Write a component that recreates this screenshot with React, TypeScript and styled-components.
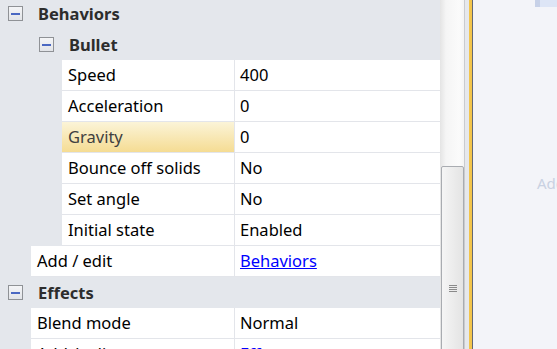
import React from "react";
import styled, { createGlobalStyle, css } from "styled-components";

const Global = createGlobalStyle`
  html, body { margin: 0; padding: 0; background: #f3f4f9; overflow: hidden; }
  body { font-family: "Noto Sans", "Open Sans", sans-serif; }
`;

const Page = styled.div`
  display: flex;
  width: 557px;
  height: 349px;
  overflow: hidden;
`;

const Grid = styled.div`
  width: 440px;
  flex: none;
  background: #e4e7ec;
  overflow: hidden;
`;

const List = styled.div`
  margin-top: -2px;
  display: flex;
  flex-direction: column;
`;

const Row = styled.div`
  display: flex;
  height: 31px;
  flex: none;
`;

const HeaderRow = styled(Row)<{ $level: number }>`
  align-items: center;
  padding-left: ${(p) => (p.$level === 0 ? 8 : 39)}px;
  gap: 15px;
`;

const ExpandBox = styled.span`
  width: 15px;
  height: 15px;
  box-sizing: border-box;
  border: 1px solid #8f9296;
  background: linear-gradient(#f4f5f7, #e2e4e8);
  display: flex;
  align-items: center;
  justify-content: center;
  flex: none;
  &::after {
    content: "";
    width: 9px;
    height: 2px;
    background: #4a68c2;
  }
`;

const HeaderText = styled.span`
  font-weight: 700;
  font-size: 16.5px;
  color: #2d2d2d;
  line-height: 1;
  padding-top: 1px;
`;

const Indent = styled.div<{ $w: number }>`
  width: ${(p) => p.$w}px;
  flex: none;
`;

const cellText = css`
  font-size: 16.5px;
  line-height: 1;
  padding-top: 1px;
  color: #000;
  white-space: nowrap;
`;

const NameCell = styled.div<{ $selected?: boolean }>`
  flex: 1;
  box-sizing: border-box;
  border-bottom: 1px solid #e3e5ea;
  background: #fff;
  display: flex;
  align-items: center;
  padding-left: 6px;
  ${cellText}
  ${(p) =>
    p.$selected &&
    css`
      background: linear-gradient(#fbf4d8, #f5dc93);
      color: #404040;
    `}
`;

const ValueCell = styled.div`
  width: 206px;
  flex: none;
  box-sizing: border-box;
  border-bottom: 1px solid #e3e5ea;
  border-left: 1px solid #e3e5ea;
  background: #fff;
  display: flex;
  align-items: center;
  padding-left: 5px;
  ${cellText}
`;

const Link = styled.a`
  color: #0000ff;
  text-decoration: underline;
  cursor: pointer;
`;

const ScrollTrack = styled.div`
  width: 25px;
  flex: none;
  box-sizing: border-box;
  padding-top: 166px;
  background: linear-gradient(to right, #e4e4e4, #f5f5f5 25%, #fbfbfb 80%, #f4f4f4);
  border-right: 1px solid #c9cbcf;
  display: flex;
  flex-direction: column;
`;

const Thumb = styled.div`
  flex: 1;
  margin: 0 0 -4px 1px;
  box-sizing: border-box;
  border: 1px solid #a9acb1;
  border-radius: 2px;
  background: linear-gradient(to right, #f5f5f5, #e4e4e4);
  display: flex;
  justify-content: center;
  padding-top: 118px;
`;

const Grip = styled.div`
  width: 8px;
  height: 8px;
  background: repeating-linear-gradient(#8a8a8a 0 1px, transparent 1px 2px);
`;

const Splitter = styled.div`
  width: 8px;
  flex: none;
  display: flex;
  background: #e6e8ec;
  &::before {
    content: "";
    margin-left: 4px;
    width: 3px;
    background: #f3c54c;
  }
  &::after {
    content: "";
    width: 1px;
    background: #646874;
  }
`;

const RightPanel = styled.div`
  flex: 1;
  background: #f3f4f9;
  display: flex;
  flex-direction: column;
  align-items: flex-end;
  overflow: hidden;
`;

const TopChip = styled.div`
  width: 22px;
  height: 7px;
  box-sizing: border-box;
  border-left: 5px solid #c7d1e8;
  background: #dde5f6;
`;

const Hint = styled.div`
  margin-top: 166px;
  align-self: flex-start;
  margin-left: 64px;
  white-space: nowrap;
  font-size: 15px;
  color: #c9d1e2;
`;

type Prop = { name: string; value: React.ReactNode; selected?: boolean };

const bullet: Prop[] = [
  { name: "Speed", value: "400" },
  { name: "Acceleration", value: "0" },
  { name: "Gravity", value: "0", selected: true },
  { name: "Bounce off solids", value: "No" },
  { name: "Set angle", value: "No" },
  { name: "Initial state", value: "Enabled" },
];

const PropRow = ({ indent, p }: { indent: number; p: Prop }) => (
  <Row>
    <Indent $w={indent} />
    <NameCell $selected={p.selected}>{p.name}</NameCell>
    <ValueCell>{p.value}</ValueCell>
  </Row>
);

const Header = ({ level, label }: { level: number; label: string }) => (
  <HeaderRow $level={level}>
    <ExpandBox />
    <HeaderText>{label}</HeaderText>
  </HeaderRow>
);

export default function App() {
  return (
    <>
      <Global />
      <Page>
        <Grid>
          <List>
            <Header level={0} label="Behaviors" />
            <Header level={1} label="Bullet" />
            {bullet.map((p) => (
              <PropRow key={p.name} indent={62} p={p} />
            ))}
            <PropRow indent={31} p={{ name: "Add / edit", value: <Link>Behaviors</Link> }} />
            <Header level={0} label="Effects" />
            <PropRow indent={31} p={{ name: "Blend mode", value: "Normal" }} />
            <PropRow indent={31} p={{ name: "Add / edit", value: <Link>Effects</Link> }} />
          </List>
        </Grid>
        <ScrollTrack>
          <Thumb>
            <Grip />
          </Thumb>
        </ScrollTrack>
        <Splitter />
        <RightPanel>
          <TopChip />
          <Hint>Add</Hint>
        </RightPanel>
      </Page>
    </>
  );
}
